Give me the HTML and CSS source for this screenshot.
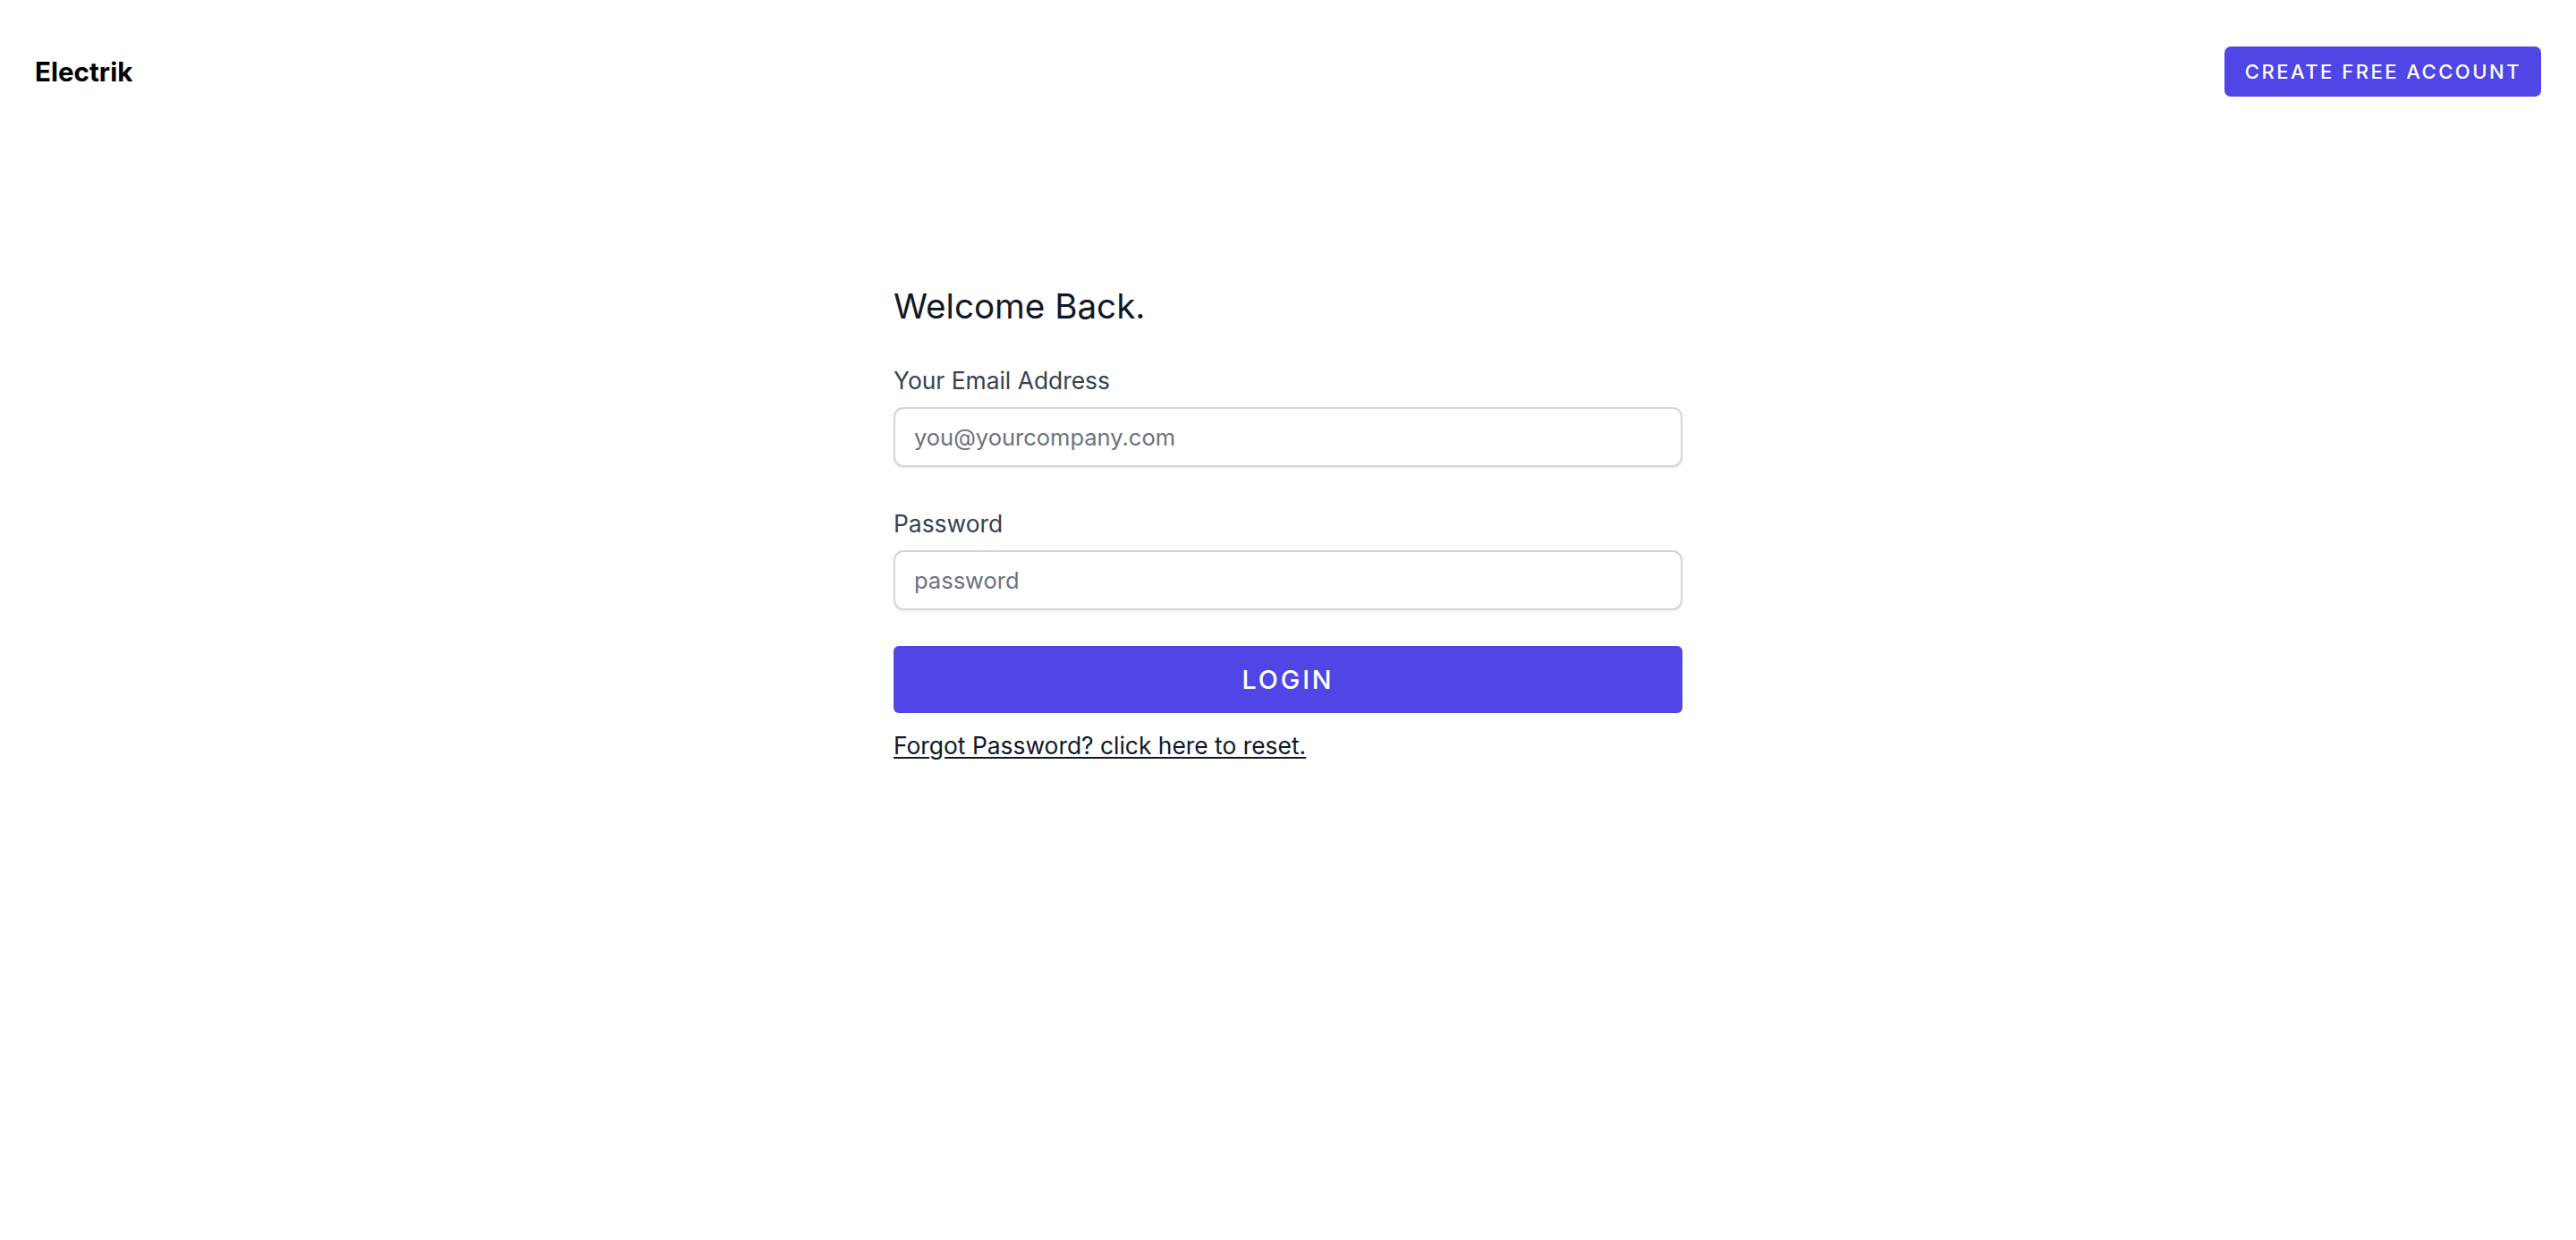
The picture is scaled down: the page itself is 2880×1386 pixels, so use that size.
FILE: index.html
```html
<!DOCTYPE html>
<html lang="en">
<head>
<meta charset="utf-8">
<title>Electrik - Login</title>
<link rel="stylesheet" href="styles.css">
</head>
<body>
<header class="topbar">
  <a class="brand" href="#">Electrik</a>
  <a class="btn-create" href="#">CREATE FREE ACCOUNT</a>
</header>
<main class="main">
  <form class="login-form">
    <h1 class="title">Welcome Back.</h1>
    <label class="label" for="email">Your Email Address</label>
    <input class="field" id="email" type="email" placeholder="you@yourcompany.com">
    <label class="label label-second" for="password">Password</label>
    <input class="field" id="password" type="password" placeholder="password">
    <button class="btn-login" type="button">LOGIN</button>
    <a class="forgot" href="#">Forgot Password? click here to reset.</a>
  </form>
</main>
</body>
</html>
```

FILE: styles.css
```css
* { box-sizing: border-box; }
html, body { margin: 0; padding: 0; background: #ffffff; }
body {
  font-family: Inter, "Liberation Sans", sans-serif;
  color: #111827;
  width: 2880px;
  height: 1386px;
  overflow: hidden;
}
.topbar {
  display: flex;
  justify-content: space-between;
  align-items: center;
  padding: 52px 39px 0 39px;
}
.brand {
  font-size: 29.6px;
  font-weight: 700;
  line-height: 56px;
  color: #000000;
  text-decoration: none;
}
.btn-create {
  display: flex;
  align-items: center;
  height: 56px;
  padding: 0 22px 0 23px;
  background: #4f46e5;
  color: #ffffff;
  font-size: 22px;
  letter-spacing: 2.5px;
  font-weight: 500;
  border-radius: 7px;
  text-decoration: none;
}
.main {
  display: flex;
  justify-content: center;
  padding-top: 216px;
}
.login-form {
  width: 882px;
  display: flex;
  flex-direction: column;
  align-items: stretch;
}
.title {
  margin: 0;
  font-size: 38.6px;
  line-height: 36px;
  font-weight: 400;
  color: #111827;
}
.label {
  display: block;
  margin-top: 53px;
  font-size: 26.4px;
  line-height: 25.2px;
  font-weight: 400;
  color: #374151;
}
.label-second { margin-top: 51px; }
.field {
  margin-top: 17px;
  height: 67px;
  padding: 0 21px;
  border: 2px solid #d1d5db;
  border-radius: 11px;
  box-shadow: 0 2px 3px rgba(0, 0, 0, 0.06);
  font-family: Inter, "Liberation Sans", sans-serif;
  font-size: 25.5px;
  color: #111827;
  background: #ffffff;
  outline: none;
}
.field::placeholder { color: #6b7280; opacity: 1; }
.btn-login {
  margin-top: 40px;
  height: 75px;
  border: none;
  border-radius: 6px;
  background: #4f46e5;
  color: #ffffff;
  font-family: Inter, "Liberation Sans", sans-serif;
  font-size: 28.8px;
  letter-spacing: 0.1em;
  font-weight: 500;
  cursor: pointer;
}
.forgot {
  align-self: flex-start;
  margin-top: 24px;
  font-size: 26.4px;
  line-height: 25.2px;
  color: #111827;
  text-decoration: underline;
  text-underline-offset: 3px;
}
```
